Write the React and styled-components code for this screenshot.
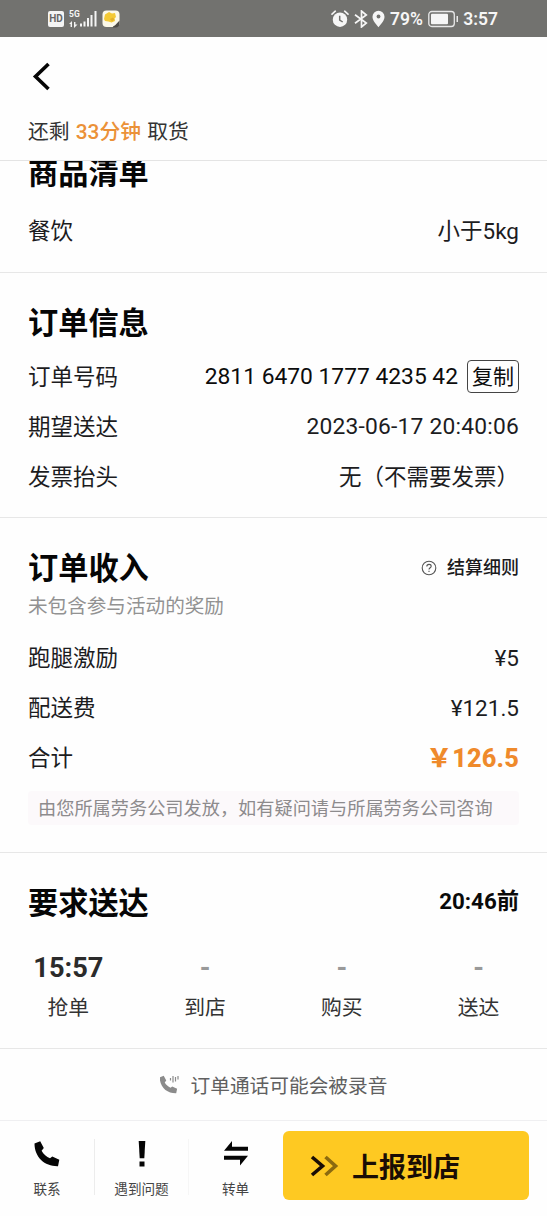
import React from "react";
import styled, { createGlobalStyle } from "styled-components";

const GlobalStyle = createGlobalStyle`
  * {
    box-sizing: border-box;
  }

  body {
    margin: 0;
    background: #fefefe;
  }
`;

const Page = styled.div`
  width: 547px;
  height: 1216px;
  overflow: hidden;
  display: flex;
  flex-direction: column;
  font-family: Roboto, "Noto Sans CJK SC", sans-serif;
  color: #1c1c1e;
  background: #fefefe;
  white-space: nowrap;

  svg {
    display: block;
    flex: none;
  }
`;

const StatusBar = styled.div`
  height: 37px;
  flex: none;
  display: flex;
  justify-content: space-between;
  align-items: center;
  padding: 0 49px 0 48px;
  background: #72726f;
  color: #f6f6f6;
  font-size: 17.5px;
  font-weight: 600;
`;

const StatusGroup = styled.div`
  display: flex;
  align-items: center;
  gap: ${(props) => props.$gap}px;
`;

const HdBadge = styled.span`
  width: 16px;
  height: 16px;
  border-radius: 2px;
  background: #f4f4f4;
  color: #666;
  font-size: 10px;
  font-weight: 700;
  line-height: 16px;
  text-align: center;
`;

const Signal = styled.div`
  display: flex;
  align-items: flex-end;
  width: 28px;
  height: 18px;
`;

const Network = styled.div`
  width: 11px;
  height: 18px;
  font-size: 8.5px;
  line-height: 9px;
  font-weight: 700;

  svg {
    margin-top: 2px;
  }
`;

const Header = styled.header`
  height: 124px;
  flex: none;
  border-bottom: 1px solid #e4e4e4;
  padding: 24px 28px 0;
`;

const BackButton = styled.div`
  height: 31px;
  padding-left: 4px;
`;

const Remaining = styled.div`
  margin-top: 24px;
  font-size: 20.8px;
  line-height: 32px;
  color: #333;

  span {
    color: #eb9138;
    font-weight: 500;
    margin: 0 1px;
  }
`;

const Section = styled.section`
  height: ${(props) => props.$height}px;
  flex: none;
  overflow: hidden;
  padding: ${(props) => props.$top || 0}px 28px 0;
  border-bottom: 1px solid #e7e7e7;
`;

const Title = styled.h2`
  margin: 0;
  font-size: 30.2px;
  line-height: 52px;
  font-weight: 700;
  color: #060606;
`;

const TitleRow = styled.div`
  display: flex;
  justify-content: space-between;
  align-items: center;
  height: 52px;
`;

const ScrolledTitle = styled(Title)`
  margin: -13px 0 6px;
`;

const Row = styled.div`
  display: flex;
  justify-content: space-between;
  align-items: center;
  height: 50px;
  font-size: 22.5px;
  line-height: 50px;
`;

const OrderRows = styled.div`
  padding-top: 2px;
`;

const OrderNo = styled.div`
  display: flex;
  align-items: center;
  gap: 9px;
  color: #0c0c0c;
  font-size: 22.8px;
  font-weight: 450;
`;

const DateText = styled.span`
  font-size: 22.8px;
  letter-spacing: 0.2px;
`;

const CopyButton = styled.div`
  width: 52px;
  height: 33px;
  margin-top: -2px;
  border: 1.5px solid #444;
  border-radius: 4px;
  font-size: 21px;
  font-weight: 400;
  line-height: 32px;
  text-align: center;
`;

const Rules = styled.div`
  display: flex;
  align-items: center;
  gap: 10px;
  font-size: 18px;
  line-height: 30px;
  font-weight: 500;
  margin-top: -3px;
`;

const SubTitle = styled.div`
  font-size: 19.6px;
  line-height: 26px;
  color: #929292;
  margin: -1px 0 13px;
`;

const Total = styled.span`
  color: #ef8a2b;
  font-size: 25.4px;
  letter-spacing: 0.15px;
  font-weight: 800;
`;

const Notice = styled.div`
  height: 34px;
  margin: 8px 0 0;
  padding-left: 10px;
  border-radius: 4px;
  background: #fcf9fb;
  color: #8d8b8d;
  font-size: 18.2px;
  line-height: 35px;
`;

const Deadline = styled.span`
  font-size: 22.3px;
  line-height: 46px;
  font-weight: 700;
  color: #0a0a0a;
  margin-top: -6px;
`;

const Steps = styled.div`
  display: grid;
  grid-template-columns: repeat(4, 1fr);
  margin: 18px -28px 0;
  text-align: center;
`;

const StepTime = styled.div`
  font-size: 27.2px;
  line-height: 40px;
  font-weight: 700;
  color: ${(props) => (props.$done ? "#2b2b2b" : "#999")};
`;

const StepName = styled.div`
  font-size: 20.8px;
  line-height: 40px;
  color: #333;
`;

const RecordTip = styled.div`
  height: 72px;
  flex: none;
  display: flex;
  justify-content: center;
  align-items: center;
  gap: 11px;
  border-bottom: 1px solid #efeff1;
  color: #606060;
  font-size: 19.7px;
`;

const Footer = styled.footer`
  height: 95px;
  display: flex;
  padding-top: 10px;
`;

const Action = styled.div`
  width: ${(props) => props.$width || 94}px;
  height: 56px;
  margin-top: 8px;
  display: flex;
  flex-direction: column;
  align-items: center;
  border-right: 1px solid ${(props) => props.$line || "transparent"};
  font-size: 13.6px;
  line-height: 20px;
  color: #444;

  svg {
    margin: 0 0 10px;
  }
`;

const ReportButton = styled.div`
  width: 246px;
  height: 69px;
  padding-left: 27px;
  display: flex;
  align-items: center;
  gap: 13px;
  border-radius: 6px;
  background: #fec922;
  color: #1a0d05;
  font-size: 27px;
  font-weight: 700;
`;

const handsetPath =
  "M2.500 4.500L8.200 2.300 11.800 9 9.600 11.800C11.500 15.200 14.500 17.800 18 19.300L20.300 17.600 27.300 20.800 26 27.200C13 27.500 2.500 18.500 2.500 4.500z";

const DataArrows = () => (
  <svg width="10" height="7" viewBox="0 0 10 7" fill="#f4f4f4">
    <path d="M0 3L3 0v6H1.600V3zM8.500 3.500L5 7V1h1.400v2.500z" />
  </svg>
);

const SignalBars = () => (
  <svg width="17" height="18" viewBox="0 0 17 18" fill="#f4f4f4">
    <rect x="0" y="13.500" width="2" height="3" />
    <rect x="3.500" y="11.500" width="2" height="5" />
    <rect x="7" y="8" width="2" height="8.500" />
    <rect x="10.500" y="5" width="2" height="11.500" />
    <rect x="14.500" y="1" width="2" height="15.500" />
  </svg>
);

const AppBadge = () => (
  <svg width="18" height="18" viewBox="0 0 18 18">
    <rect x="0.500" y="0.500" width="17" height="16.500" rx="4" fill="#fbf8e8" />
    <path d="M3 4.500l4-2.500 3 1.500 3-.5 1 4-1.500 1.500.5 2.500-3.500 1.500-3-1-3.500-.5L2 9z" fill="#f3c935" />
    <path d="M8 9l3-1.500 1.500 2-2.500 2z" fill="#e3b02a" />
    <path d="M17.500 10.500v3a4 4 0 0 1-4 4H10.500c1-2 2.500-1.500 4-3.700z" fill="#4c4a45" />
  </svg>
);

const AlarmIcon = () => (
  <svg width="18" height="18" viewBox="0 0 18 18">
    <circle cx="9" cy="9.700" r="7.200" fill="#f6f6f6" />
    <path d="M1 4.200L4.300 1.200M17 4.200l-3.300-3" stroke="#f6f6f6" strokeWidth="1.600" strokeLinecap="round" />
    <path d="M8.700 5.800v4.200l3 2" fill="none" stroke="#72726f" strokeWidth="1.500" />
  </svg>
);

const BluetoothIcon = () => (
  <svg width="14" height="18" viewBox="0 0 14 18">
    <path d="M1 4.700l11.300 8.300L7.500 17V1l4.800 4L1 13.300" fill="none" stroke="#f6f6f6" strokeWidth="1.700" />
  </svg>
);

const PinIcon = () => (
  <svg width="13" height="18" viewBox="0 0 13 18">
    <path d="M6.500.8a6 6 0 0 1 6 6c0 4-3.500 7-6 10.400C4 13.800.5 10.800.5 6.800a6 6 0 0 1 6-6z" fill="#f6f6f6" />
    <circle cx="6.500" cy="6.500" r="1.900" fill="#72726f" />
  </svg>
);

const BatteryIcon = () => (
  <svg width="31" height="18" viewBox="0 0 31 18">
    <rect x="0.800" y="1.500" width="25.500" height="15" rx="3" fill="none" stroke="#e8e8e8" strokeWidth="1.300" />
    <rect x="3" y="3.800" width="17" height="10.500" rx="1" fill="#f6f6f6" />
    <rect x="28.500" y="6" width="1.500" height="6" fill="#e8e8e8" />
  </svg>
);

const HelpIcon = () => (
  <svg width="16" height="16" viewBox="0 0 16 16" fill="none" stroke="#555" strokeWidth="1.100">
    <circle cx="8" cy="8" r="6.800" />
    <path d="M5.800 6.500C5.800 3.600 10.200 3.800 10.200 6.300 10.200 7.800 8 7.800 8 9.600M8 10.800v1.300" />
  </svg>
);

const RecordIcon = () => (
  <svg width="20" height="20" viewBox="0 0 20 20">
    <path transform="translate(-2 -.8) scale(.7)" d={handsetPath} fill="#8b8b8b" />
    <path d="M10.500 3v2.500M13 1v6.500M15.500 2v4.500M18 1v3.500" stroke="#8b8b8b" strokeWidth="1.200" />
  </svg>
);

const PhoneIcon = () => (
  <svg width="30" height="30" viewBox="0 0 30 30">
    <path d={handsetPath} fill="#050505" />
  </svg>
);

const AlertIcon = () => (
  <svg width="30" height="30" viewBox="0 0 30 30" fill="#050505">
    <path d="M11.700 2h6.600l-1 17.200h-4.600z" />
    <rect x="12.500" y="22.500" width="5" height="5" />
  </svg>
);

const TransferIcon = () => (
  <svg width="30" height="30" viewBox="0 0 30 30" fill="#050505">
    <path d="M3 11.800L11 2v5.800h16v4z" />
    <path d="M27 16.800L19 26.500v-5.700H3v-4z" />
  </svg>
);

const ArrowsIcon = () => (
  <svg width="29" height="22" viewBox="0 0 29 22" fill="none" strokeWidth="3.600">
    <path d="M15.500 2L25.500 11l-10 9" stroke="#8b6a10" />
    <path d="M2 2l10.500 9L2 20" stroke="#1a0d05" />
  </svg>
);

const steps = [
  { time: "15:57", name: "抢单", done: true },
  { time: "-", name: "到店" },
  { time: "-", name: "购买" },
  { time: "-", name: "送达" },
];

const App = () => {
  return (
    <Page>
      <GlobalStyle />
      <StatusBar>
        <StatusGroup $gap={5}>
          <HdBadge>HD</HdBadge>
          <Signal>
            <Network>
              5G
              <DataArrows />
            </Network>
            <SignalBars />
          </Signal>
          <AppBadge />
        </StatusGroup>
        <StatusGroup $gap={4.7}>
          <AlarmIcon />
          <BluetoothIcon />
          <PinIcon />
          <span>79%</span>
          <BatteryIcon />
          <span>3:57</span>
        </StatusGroup>
      </StatusBar>

      <Header>
        <BackButton>
          <svg width="20" height="31" viewBox="0 0 20 31">
            <path d="M16.500 3L3.500 15.500l13 12.500" fill="none" stroke="#050505" strokeWidth="3.600" />
          </svg>
        </BackButton>
        <Remaining>
          还剩 <span>33分钟</span> 取货
        </Remaining>
      </Header>

      <Section $height={112}>
        <ScrolledTitle>商品清单</ScrolledTitle>
        <Row>
          <span>餐饮</span>
          <span>小于5kg</span>
        </Row>
      </Section>

      <Section $height={245} $top={25}>
        <Title>订单信息</Title>
        <OrderRows>
          <Row>
            <span>订单号码</span>
            <OrderNo>
              <span>2811 6470 1777 4235 42</span>
              <CopyButton>复制</CopyButton>
            </OrderNo>
          </Row>
          <Row>
            <span>期望送达</span>
            <DateText>2023-06-17 20:40:06</DateText>
          </Row>
          <Row>
            <span>发票抬头</span>
            <span>无（不需要发票）</span>
          </Row>
        </OrderRows>
      </Section>

      <Section $height={335} $top={25}>
        <TitleRow>
          <Title>订单收入</Title>
          <Rules>
            <HelpIcon />
            结算细则
          </Rules>
        </TitleRow>
        <SubTitle>未包含参与活动的奖励</SubTitle>
        <Row>
          <span>跑腿激励</span>
          <span>¥5</span>
        </Row>
        <Row>
          <span>配送费</span>
          <span>¥121.5</span>
        </Row>
        <Row>
          <span>合计</span>
          <Total>￥126.5</Total>
        </Row>
        <Notice>由您所属劳务公司发放，如有疑问请与所属劳务公司咨询</Notice>
      </Section>

      <Section $height={196} $top={25}>
        <TitleRow>
          <Title>要求送达</Title>
          <Deadline>20:46前</Deadline>
        </TitleRow>
        <Steps>
          {steps.map((step) => (
            <div key={step.name}>
              <StepTime $done={step.done}>{step.time}</StepTime>
              <StepName>{step.name}</StepName>
            </div>
          ))}
        </Steps>
      </Section>

      <RecordTip>
        <RecordIcon />
        订单通话可能会被录音
      </RecordTip>

      <Footer>
        <Action $width={95} $line="#ececec">
          <PhoneIcon />
          联系
        </Action>
        <Action $width={94} $line="#f6f6f6">
          <AlertIcon />
          遇到问题
        </Action>
        <Action $width={94}>
          <TransferIcon />
          转单
        </Action>
        <ReportButton>
          <ArrowsIcon />
          上报到店
        </ReportButton>
      </Footer>
    </Page>
  );
};

export default App;
